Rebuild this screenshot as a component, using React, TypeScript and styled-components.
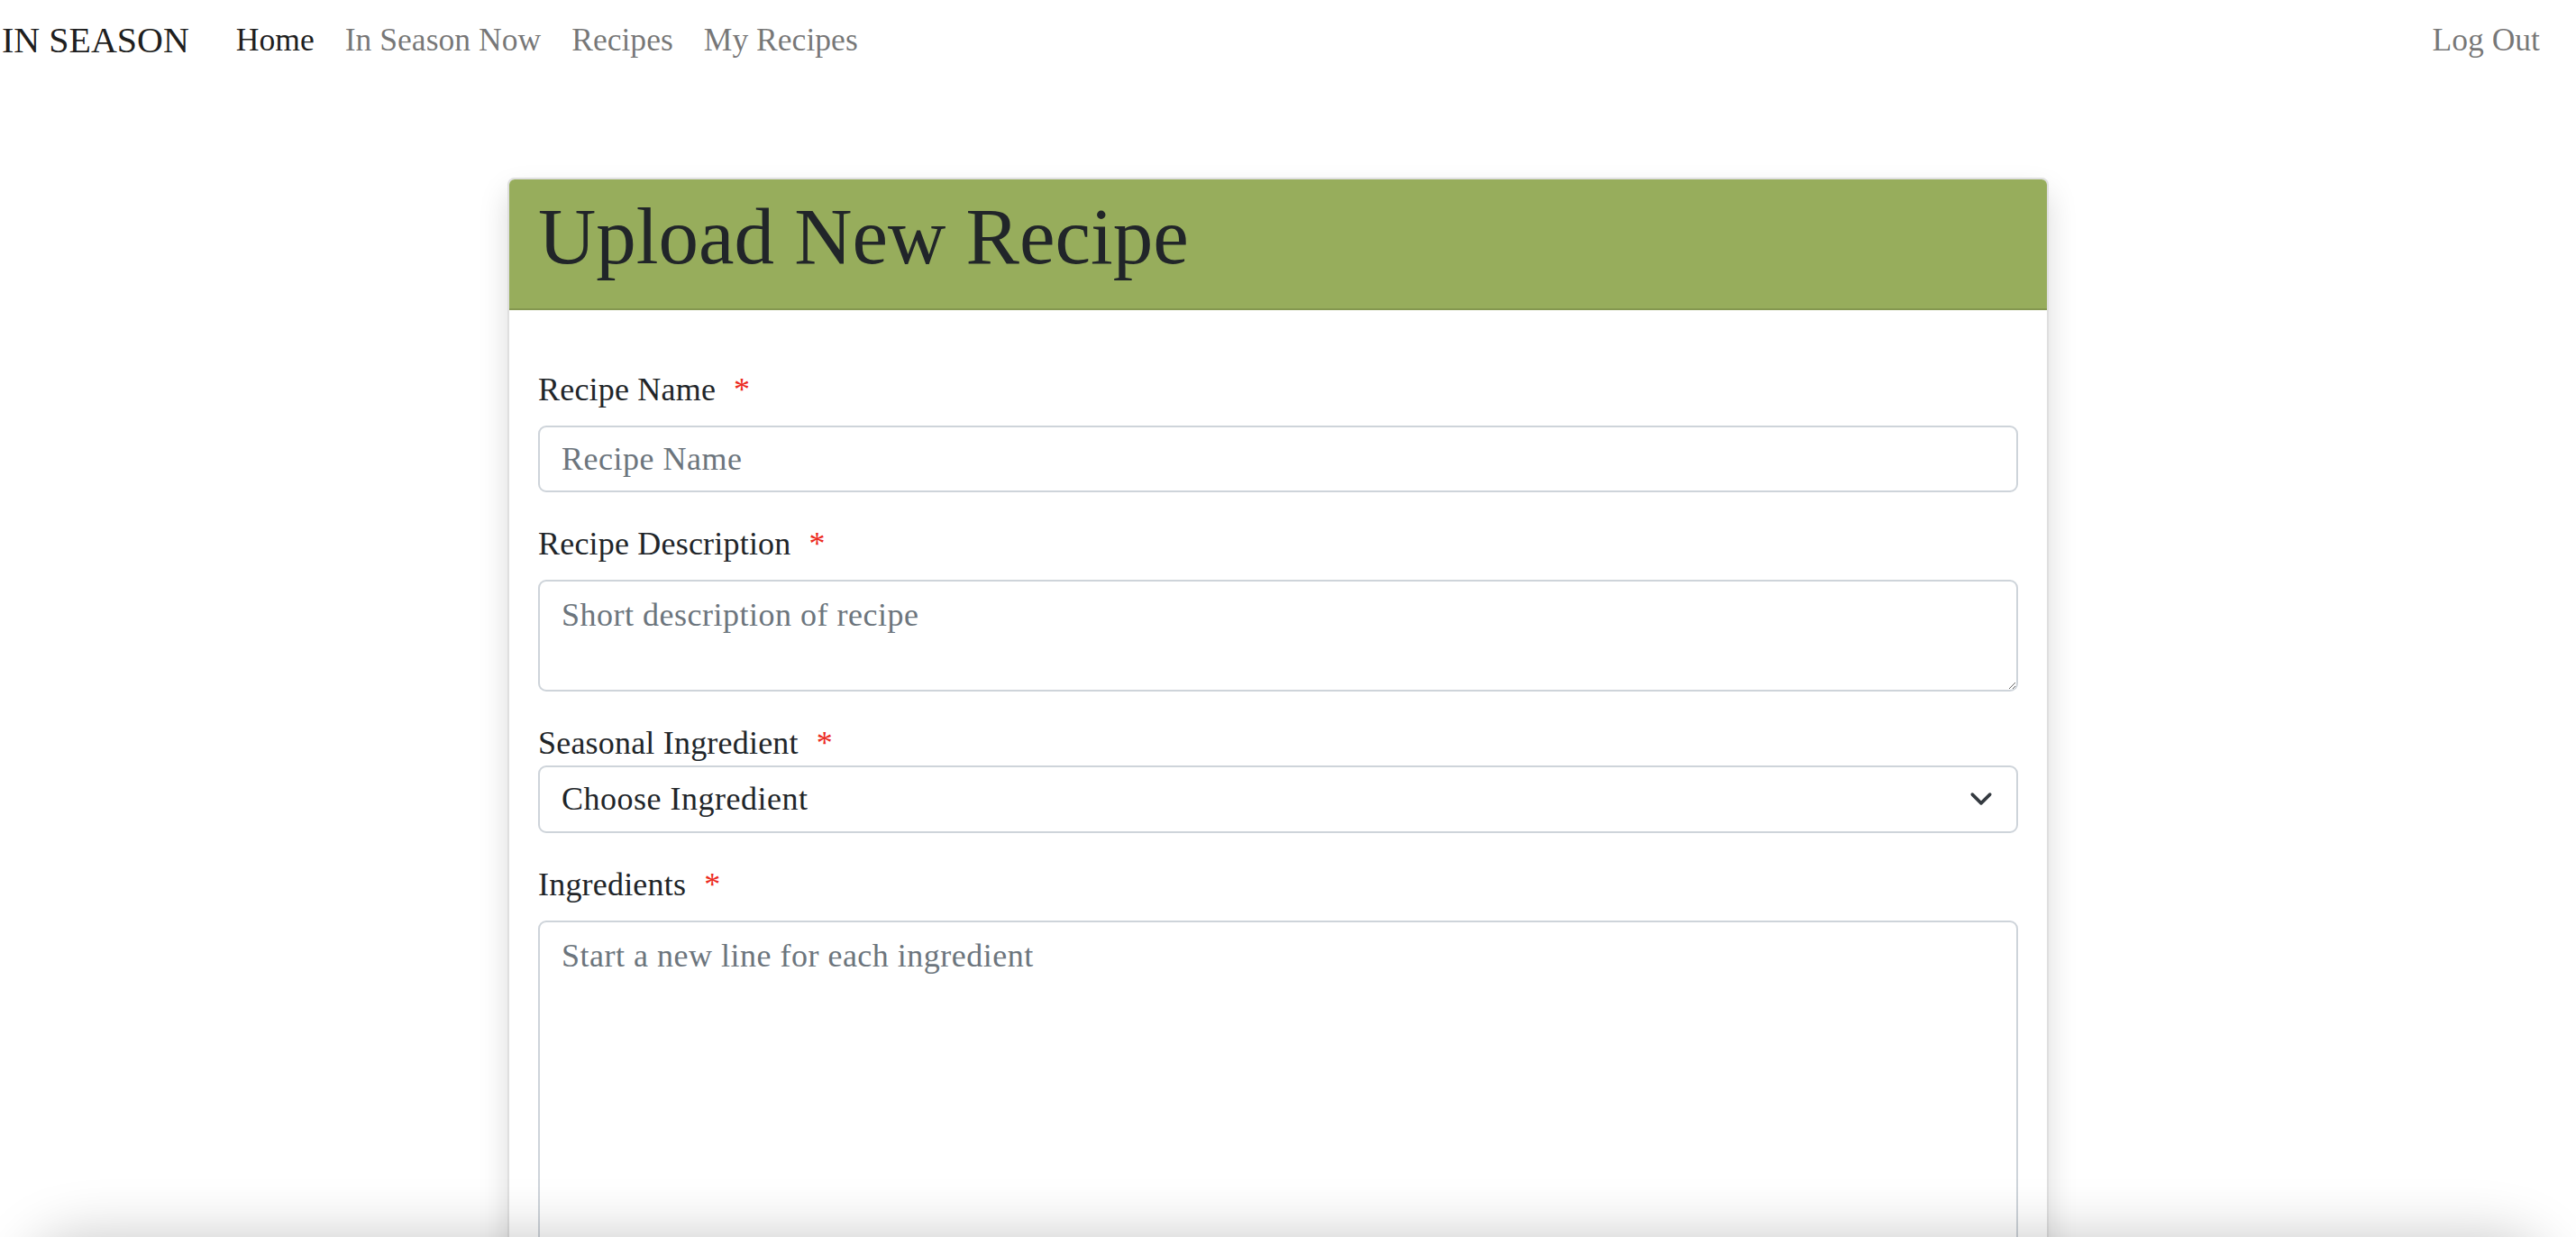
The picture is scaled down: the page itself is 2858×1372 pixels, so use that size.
import React from "react";
import styled, { createGlobalStyle } from "styled-components";

const GlobalStyle = createGlobalStyle`
  html, body {
    margin: 0;
    padding: 0;
    background: #ffffff;
    font-family: "Liberation Serif", "Times New Roman", serif;
    color: #212529;
  }
  * { box-sizing: border-box; }
`;

const Page = styled.div`
  min-height: 1372px;
  display: flex;
  flex-direction: column;
`;

const NavBar = styled.nav`
  height: 89px;
  display: flex;
  align-items: center;
  padding: 0 40px 0 2px;
`;

const Brand = styled.a`
  font-size: 40px;
  line-height: 1.5;
  color: rgba(0, 0, 0, 0.9);
  text-decoration: none;
  white-space: nowrap;
  margin-right: 52px;
`;

const NavList = styled.div`
  display: flex;
  align-items: center;
  gap: 34px;
`;

const NavLink = styled.a<{ $active?: boolean }>`
  font-size: 35.6px;
  line-height: 1.5;
  color: ${(p) => (p.$active ? "rgba(0, 0, 0, 0.9)" : "rgba(0, 0, 0, 0.55)")};
  text-decoration: none;
  white-space: nowrap;
`;

const RightNav = styled.div`
  margin-left: auto;
  display: flex;
  align-items: center;
`;

const Main = styled.main`
  display: flex;
  justify-content: center;
  padding: 108px 22px 0 0;
`;

const Card = styled.section`
  width: 1710px;
  background: #ffffff;
  border: 2px solid rgba(0, 0, 0, 0.125);
  border-radius: 8px;
  box-shadow: 0 16px 32px rgba(0, 0, 0, 0.15);
  overflow: hidden;
`;

const CardHeader = styled.header`
  background: #97ad5c;
  border-bottom: 2px solid rgba(0, 0, 0, 0.125);
  padding: 10px 32px 26px 32px;
`;

const Title = styled.h1`
  margin: 0;
  font-size: 89px;
  line-height: 1.2;
  font-weight: 400;
  color: #212529;
`;

const CardBody = styled.div`
  padding: 64px 32px 32px 32px;
`;

const Form = styled.form`
  display: flex;
  flex-direction: column;
  gap: 33px;
`;

const Group = styled.div`
  display: flex;
  flex-direction: column;
`;

const Label = styled.label<{ $tight?: boolean }>`
  font-size: 36px;
  letter-spacing: 0.2px;
  line-height: 48px;
  color: #212529;
  margin-bottom: ${(p) => (p.$tight ? "1px" : "16px")};
`;

const Required = styled.span`
  color: #ec2b1f;
  margin-left: 20px;
`;

const fieldBase = `
  width: 100%;
  font-family: "Liberation Serif", "Times New Roman", serif;
  font-size: 36px;
  letter-spacing: 0.5px;
  line-height: 48px;
  color: #212529;
  background: #ffffff;
  border: 2px solid #ced4da;
  border-radius: 9px;
  padding: 11px 24px;
  outline: none;
  &::placeholder { color: #6c757d; opacity: 1; }
`;

const TextInput = styled.input`
  ${fieldBase}
  height: 74px;
`;

const TextArea = styled.textarea<{ $h: number }>`
  ${fieldBase}
  display: block;
  height: ${(p) => p.$h}px;
  resize: vertical;
  padding-top: 13px;
`;

const SelectWrap = styled.div`
  position: relative;
`;

const Select = styled.select`
  ${fieldBase}
  height: 75px;
  appearance: none;
  -webkit-appearance: none;
  padding-right: 72px;
`;

const Chevron = styled.svg`
  position: absolute;
  right: 28px;
  top: 50%;
  transform: translateY(-50%);
  width: 26px;
  height: 18px;
  pointer-events: none;
`;

const BottomShade = styled.div`
  position: fixed;
  left: 30px;
  right: 30px;
  bottom: -120px;
  height: 120px;
  border-radius: 60px;
  box-shadow: 0 0 64px rgba(0, 0, 0, 0.22);
  background: #e6e6e6;
  pointer-events: none;
`;

export default function App() {
  return (
    <>
      <GlobalStyle />
      <Page>
        <NavBar>
          <Brand href="#">IN SEASON</Brand>
          <NavList>
            <NavLink href="#" $active>
              Home
            </NavLink>
            <NavLink href="#">In Season Now</NavLink>
            <NavLink href="#">Recipes</NavLink>
            <NavLink href="#">My Recipes</NavLink>
          </NavList>
          <RightNav>
            <NavLink href="#">Log Out</NavLink>
          </RightNav>
        </NavBar>
        <Main>
          <Card>
            <CardHeader>
              <Title>Upload New Recipe</Title>
            </CardHeader>
            <CardBody>
              <Form onSubmit={(e) => e.preventDefault()}>
                <Group>
                  <Label htmlFor="recipe-name">
                    Recipe Name<Required>*</Required>
                  </Label>
                  <TextInput id="recipe-name" placeholder="Recipe Name" />
                </Group>
                <Group>
                  <Label htmlFor="recipe-desc">
                    Recipe Description<Required>*</Required>
                  </Label>
                  <TextArea
                    id="recipe-desc"
                    $h={124}
                    placeholder="Short description of recipe"
                  />
                </Group>
                <Group>
                  <Label htmlFor="seasonal" $tight>
                    Seasonal Ingredient<Required>*</Required>
                  </Label>
                  <SelectWrap>
                    <Select id="seasonal" defaultValue="">
                      <option value="">Choose Ingredient</option>
                    </Select>
                    <Chevron viewBox="0 0 16 11" fill="none">
                      <path
                        d="M2 2.5l6 6 6-6"
                        stroke="#343a40"
                        strokeWidth="2.2"
                        strokeLinecap="round"
                        strokeLinejoin="round"
                      />
                    </Chevron>
                  </SelectWrap>
                </Group>
                <Group>
                  <Label htmlFor="ingredients">
                    Ingredients<Required>*</Required>
                  </Label>
                  <TextArea
                    id="ingredients"
                    $h={560}
                    placeholder="Start a new line for each ingredient"
                  />
                </Group>
              </Form>
            </CardBody>
          </Card>
        </Main>
        <BottomShade />
      </Page>
    </>
  );
}
